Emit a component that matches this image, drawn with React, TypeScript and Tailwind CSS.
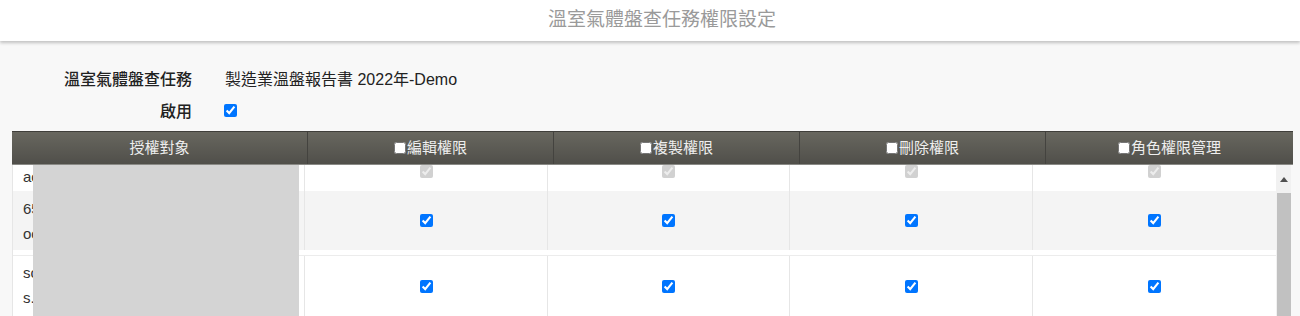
const cjk = { fontFamily: '"Liberation Sans", "Noto Sans CJK TC", sans-serif' };

const bodyCols = ["w-[243px]", "w-[242px]", "w-[243px]", "w-[243px]"];

function HeadCell({ label, w, last }: { label: string; w: string; last?: boolean }) {
  return (
    <div className={`${w} flex items-center justify-center gap-[1px] ${last ? "" : "border-r border-[#44433f]"}`}>
      <input type="checkbox" className="h-[12px] w-[12px] m-0" />
      <span>{label}</span>
    </div>
  );
}

function Row({
  lines,
  h,
  bg,
  disabled,
  pad,
}: {
  lines: string[];
  h: string;
  bg: string;
  disabled?: boolean;
  pad: string;
}) {
  return (
    <div className={`flex ${h} ${bg}`}>
      <div className={`w-[292px] shrink-0 border-r border-[#e6e6e6] pl-[10px] ${pad} flex flex-col gap-[8px] text-[15px] leading-[17px] text-[#333]`}>
        {lines.map((l) => (
          <span key={l}>{l}</span>
        ))}
      </div>
      {bodyCols.map((w, i) => (
        <div
          key={i}
          className={`${w} shrink-0 flex justify-center ${disabled ? "items-start" : "items-center"} ${
            i < 3 ? "border-r border-[#e6e6e6]" : ""
          }`}
        >
          <input
            type="checkbox"
            defaultChecked
            disabled={disabled}
            className="h-[13px] w-[13px] m-0"
          />
        </div>
      ))}
    </div>
  );
}

export default function App() {
  return (
    <div className="w-[1300px] h-[316px] overflow-hidden bg-[#f8f8f8]" style={cjk}>
      <div className="h-[41px] bg-white flex items-center justify-center pl-[24px] shadow-[0_2px_3px_rgba(0,0,0,0.22)] relative z-10">
        <h1 className="text-[19px] text-[#9a9a9a] font-normal">溫室氣體盤查任務權限設定</h1>
      </div>

      <div className="pt-[27px] flex flex-col gap-[8px] text-[16px] leading-[24px] text-[#222]">
        <div className="flex items-center">
          <span className="w-[192px] text-right font-medium">溫室氣體盤查任務</span>
          <span className="pl-[33px]">製造業溫盤報告書 2022年-Demo</span>
        </div>
        <div className="flex items-center">
          <span className="w-[192px] text-right font-medium">啟用</span>
          <span className="pl-[32px] flex items-center mb-[4px]">
            <input type="checkbox" defaultChecked className="h-[13px] w-[13px] m-0" />
          </span>
        </div>
      </div>

      <div className="ml-[12px] w-[1281px] mt-[7px]">
        <div className="flex h-[34px] text-[15px] text-[#eeeeee] border-t border-[#3f3e3a] border-b border-b-[#8a8a86] bg-gradient-to-b from-[#68675f] to-[#504f4a]">
          <div className="w-[296px] flex items-center justify-center border-r border-[#44433f]">授權對象</div>
          <HeadCell label="編輯權限" w="w-[246px]" />
          <HeadCell label="複製權限" w="w-[246px]" />
          <HeadCell label="刪除權限" w="w-[246px]" />
          <HeadCell label="角色權限管理" w="w-[247px]" last />
        </div>

        <div className="relative flex h-[152px] bg-white border-l border-[#e6e6e6] w-[1279px]">
          <div className="w-[1263px] flex flex-col">
            <Row lines={["ac"]} h="h-[26px]" bg="bg-white" disabled pad="pt-[3px]" />
            <Row lines={["65", "oc"]} h="h-[59px]" bg="bg-[#f4f4f4]" pad="pt-[9px]" />
            <div className="h-[6px] border-b border-[#ececec]" />
            <Row lines={["sc", "s."]} h="h-[61px]" bg="bg-white" pad="pt-[8px]" />
          </div>
          <div className="w-[16px] bg-[#f1f1f1] flex flex-col items-center">
            <div className="h-[28px] flex items-center justify-center">
              <div className="w-0 h-0 border-l-[4px] border-r-[4px] border-b-[5px] border-l-transparent border-r-transparent border-b-[#505050]" />
            </div>
            <div className="w-[14px] flex-1 bg-[#c1c1c1]" />
          </div>
          <div className="absolute left-[20px] top-0 w-[266px] h-full bg-[#d4d4d4]" />
        </div>
      </div>
    </div>
  );
}
